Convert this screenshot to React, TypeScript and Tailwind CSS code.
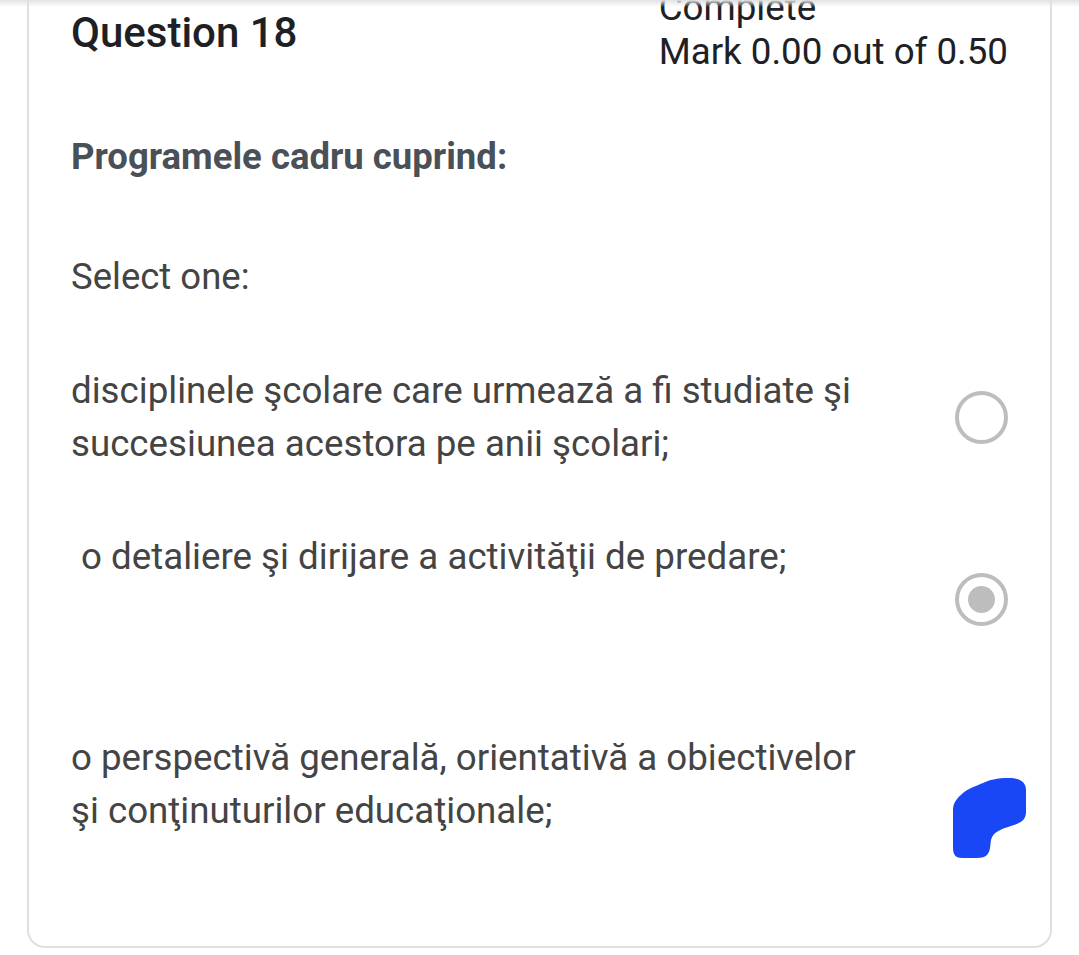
import React from "react";

const font = { fontFamily: "Roboto, 'Noto Sans', sans-serif" };

function Radio({ checked, className }: { checked?: boolean; className?: string }) {
    return (
        <div className={"flex h-[53px] w-[53px] shrink-0 items-center justify-center rounded-full border-[4px] border-[#bdbdbd] bg-white " + (className ?? "")}>
            {checked && <div className="h-[27px] w-[27px] rounded-full bg-[#bdbdbd]" />}
        </div>
    );
}

function Blob() {
    return (
        <svg width="74" height="81" viewBox="0 0 74 81" className="-mr-[19px] mt-[47px] shrink-0">
            <path
                d="M30 5 C36 2 44 0 56 0 C66 0 73 3 73 12 L73 34 C73 42 68 45 58 48 C48 51 40 54 38 62 L37 70 C36 77 32 80 24 80 L9 80 C3 80 0 77 0 70 L0 32 C0 25 4 20 10 15 C16 10 23 8 30 5 Z"
                fill="#1a47f5"
            />
        </svg>
    );
}

export default function App() {
    return (
        <div className="min-h-[955px] w-[1079px] overflow-hidden bg-white" style={font}>
            <div className="relative z-10 h-[7px] w-full bg-gradient-to-b from-[#e2e2e2] to-transparent" />
            <div className="mx-[27px] -mt-[7px] h-[948px] rounded-b-[18px] border-x-2 border-b-2 border-[#e0e0e0] pl-[42px] pr-[42px]">
                <div className="flex items-start justify-between">
                    <h2 className="mt-[8px] text-[42px] font-medium leading-[50px] text-[#1d2125]">Question 18</h2>
                    <div className="-mt-[13px] flex flex-col whitespace-nowrap text-[36.7px] text-[#1d2125]">
                        <span className="leading-[41px]">Complete</span>
                        <span className="leading-[47px]">Mark 0.00 out of 0.50</span>
                    </div>
                </div>

                <p className="mt-[60px] text-[36.5px] font-bold leading-[44px] text-[#495057]">Programele cadru cuprind:</p>

                <p className="mt-[76px] text-[36.5px] leading-[44px] text-[#444]">Select one:</p>

                <div className="mt-[65px] flex items-center justify-between">
                    <p className="w-[820px] text-[36.7px] leading-[53px] text-[#444]">
                        disciplinele şcolare care urmează a fi studiate şi succesiunea acestora pe anii şcolari;
                    </p>
                    <Radio />
                </div>

                <div className="mt-[60px] flex items-start justify-between">
                    <p className="ml-[10px] text-[36.7px] leading-[53px] text-[#444]">o detaliere şi dirijare a activităţii de predare;</p>
                    <Radio checked className="mt-[43px]" />
                </div>

                <div className="mt-[105px] flex items-start justify-between">
                    <p className="w-[820px] text-[36.7px] leading-[53px] text-[#444]">
                        o perspectivă generală, orientativă a obiectivelor şi conţinuturilor educaţionale;
                    </p>
                    <Blob />
                </div>
            </div>
        </div>
    );
}
